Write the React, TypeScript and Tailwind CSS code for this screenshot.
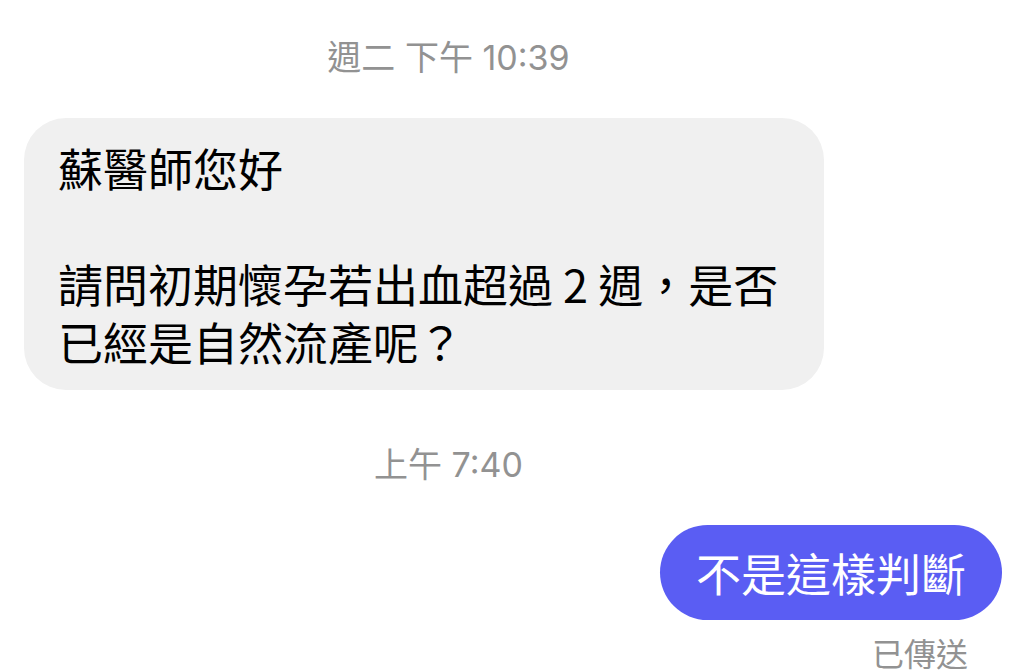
import React from "react";

export default function App() {
  return (
    <div
      className="w-[1024px] h-[672px] bg-white overflow-hidden flex flex-col"
      style={{ fontFamily: '"Noto Sans CJK TC", "Noto Sans", sans-serif' }}
    >
      <div
        className="w-[897px] mt-[38px] text-center text-[34px] leading-[40px] text-[#929292]"
        style={{ fontFamily: 'Inter, "Noto Sans CJK TC", sans-serif' }}
      >
        週二 下午 10:39
      </div>
      <div className="ml-[24px] mt-[40px] w-[800px] rounded-[42px] bg-[#f0f0f0] pl-[34px] pr-[20px] pt-[21px] pb-[19px] text-[45px] leading-[58px] text-black whitespace-nowrap">
        <div>蘇醫師您好</div>
        <div>&nbsp;</div>
        <div>請問初期懷孕若出血超過 2 週，是否</div>
        <div>已經是自然流產呢？</div>
      </div>
      <div
        className="w-[897px] mt-[55px] text-center text-[34px] leading-[40px] text-[#929292]"
        style={{ fontFamily: 'Inter, "Noto Sans CJK TC", sans-serif' }}
      >
        上午 7:40
      </div>
      <div className="flex justify-end mt-[40px] pr-[22px]">
        <div className="h-[95px] flex items-center rounded-full bg-[#5a5df3] px-[36px] text-[45px] text-white whitespace-nowrap">
          不是這樣判斷
        </div>
      </div>
      <div className="flex justify-end mt-[14px] pr-[56px] text-[32px] leading-[36px] text-[#929292]">
        已傳送
      </div>
    </div>
  );
}
